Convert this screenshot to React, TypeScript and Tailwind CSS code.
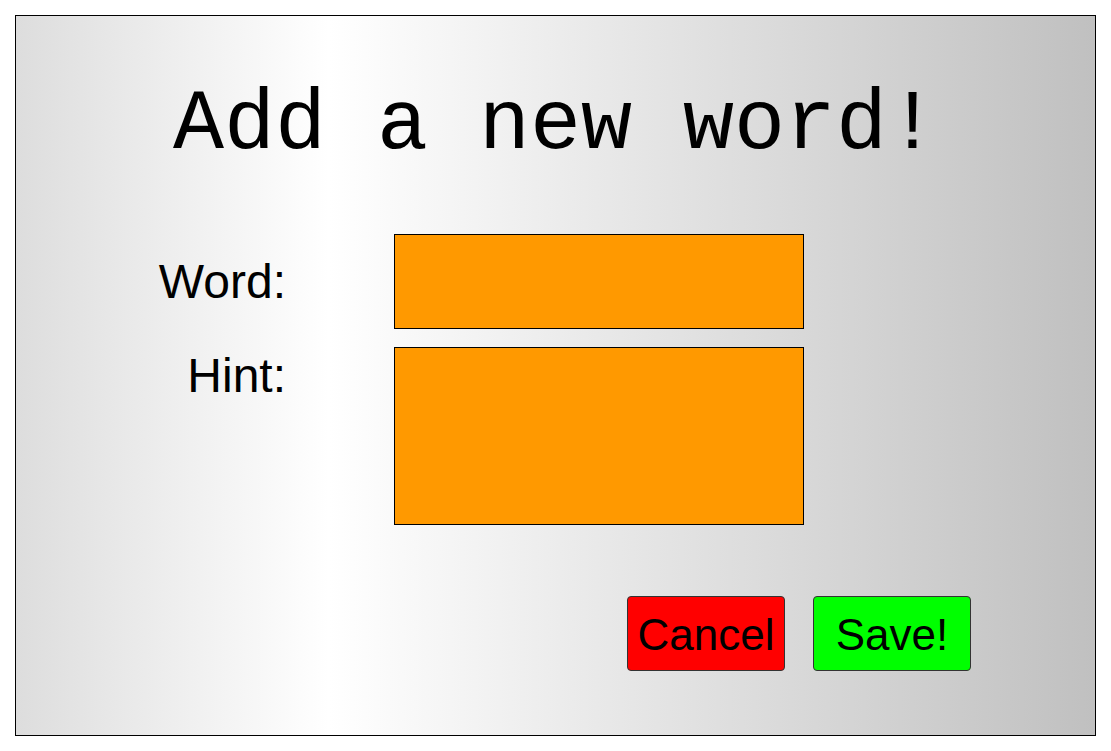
export default function App() {
  return (
    <div className="min-h-[751px] bg-white p-[15px]">
      <div
        className="flex h-[721px] w-full flex-col border border-black bg-[linear-gradient(to_right,#dddddd_0%,#ffffff_29%,#c0c0c0_100%)]"
        style={{ fontFamily: '"Liberation Sans", Arial, sans-serif' }}
      >
        <h1
          className="mt-[67px] text-center text-[85px] leading-[85px] font-normal text-black"
          style={{ fontFamily: '"Courier New", "Nimbus Mono PS", FreeMono, "Liberation Mono", monospace' }}
        >
          Add a new word!
        </h1>

        <form className="mt-[66px] flex flex-col gap-[18px]" onSubmit={(e) => e.preventDefault()}>
          <div className="flex items-center">
            <label className="w-[270px] text-right text-[48px] leading-[55px] text-black">Word:</label>
            <input
              type="text"
              className="ml-[108px] h-[95px] w-[410px] border border-black bg-[#ff9900] px-2 text-[32px] outline-none"
            />
          </div>

          <div className="flex items-start">
            <label className="mt-px w-[270px] text-right text-[48px] leading-[55px] text-black">Hint:</label>
            <textarea
              className="ml-[108px] h-[178px] w-[410px] resize-none border border-black bg-[#ff9900] px-2 text-[32px] outline-none"
            />
          </div>

          <div className="mt-[53px] flex justify-end gap-[28px] pr-[124px]">
            <button
              type="button"
              className="flex h-[75px] w-[158px] items-center justify-center rounded-[4px] border border-[#333333] bg-[#ff0000] pt-[3px] text-[44px] leading-none text-black"
            >
              Cancel
            </button>
            <button
              type="submit"
              className="flex h-[75px] w-[158px] items-center justify-center rounded-[4px] border border-[#333333] bg-[#00ff00] pt-[3px] text-[44px] leading-none text-black"
            >
              Save!
            </button>
          </div>
        </form>
      </div>
    </div>
  );
}
